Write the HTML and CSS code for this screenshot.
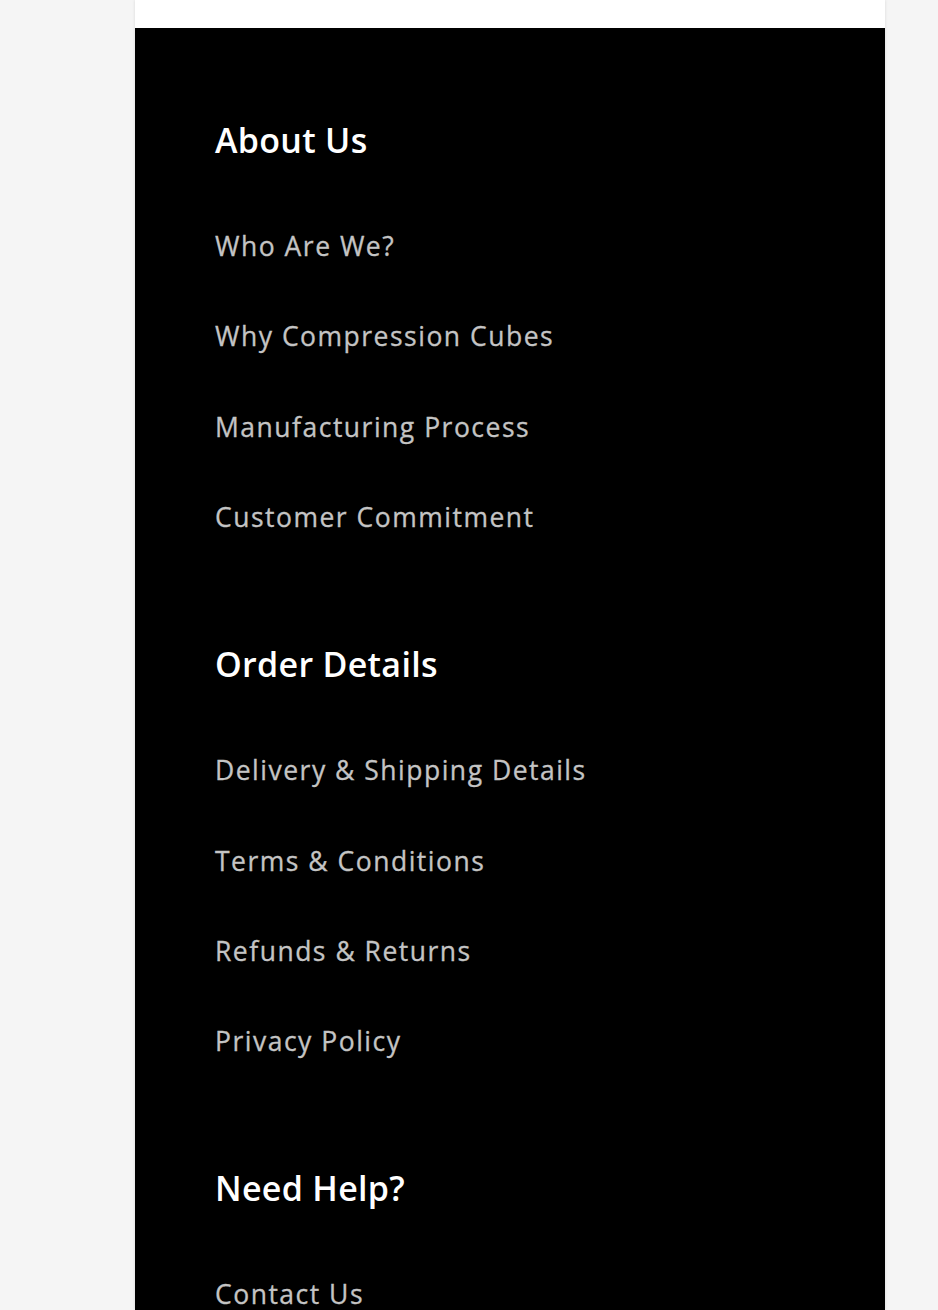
FILE: index.html
```html
<!DOCTYPE html>
<html lang="en">
<head>
<meta charset="utf-8">
<title>Footer</title>
<link rel="stylesheet" href="styles.css">
</head>
<body>
<div class="page">
  <div class="topbar"></div>
  <footer class="footer">
    <section class="col">
      <h3 class="col-title">About Us</h3>
      <ul class="links">
        <li><a href="#">Who Are We?</a></li>
        <li><a href="#">Why Compression Cubes</a></li>
        <li><a href="#">Manufacturing Process</a></li>
        <li><a href="#">Customer Commitment</a></li>
      </ul>
    </section>
    <section class="col">
      <h3 class="col-title">Order Details</h3>
      <ul class="links">
        <li><a href="#">Delivery &amp; Shipping Details</a></li>
        <li><a href="#">Terms &amp; Conditions</a></li>
        <li><a href="#">Refunds &amp; Returns</a></li>
        <li><a href="#">Privacy Policy</a></li>
      </ul>
    </section>
    <section class="col">
      <h3 class="col-title">Need Help?</h3>
      <ul class="links">
        <li><a href="#">Contact Us</a></li>
      </ul>
    </section>
  </footer>
</div>
</body>
</html>
```

FILE: styles.css
```css
html, body {
  margin: 0;
  padding: 0;
}
body {
  background: #f5f5f5;
  font-family: "Open Sans", "Noto Sans", sans-serif;
  height: 1310px;
  overflow: hidden;
}
.page {
  width: 750px;
  margin-left: 135px;
  box-shadow: 0 0 3px rgba(0,0,0,0.12);
  min-height: 1310px;
  background: #000;
}
.topbar {
  height: 28px;
  background: #fff;
}
.footer {
  background: #000;
  padding: 92px 80px 0;
  display: flex;
  flex-direction: column;
  gap: 112px;
}
.col-title {
  margin: 0;
  font-size: 34px;
  line-height: 40px;
  font-weight: 600;
  letter-spacing: 0.3px;
  color: #fff;
}
.links {
  list-style: none;
  margin: 71px 0 0;
  padding: 0;
  display: flex;
  flex-direction: column;
  gap: 60.4px;
}
.links li {
  line-height: 30px;
  height: 30px;
}
.links a {
  color: #c4c4c4;
  text-decoration: none;
  font-size: 26.5px;
  font-weight: 500;
  letter-spacing: 1.5px;
  -webkit-text-stroke: 0.3px #c4c4c4;
}
```
